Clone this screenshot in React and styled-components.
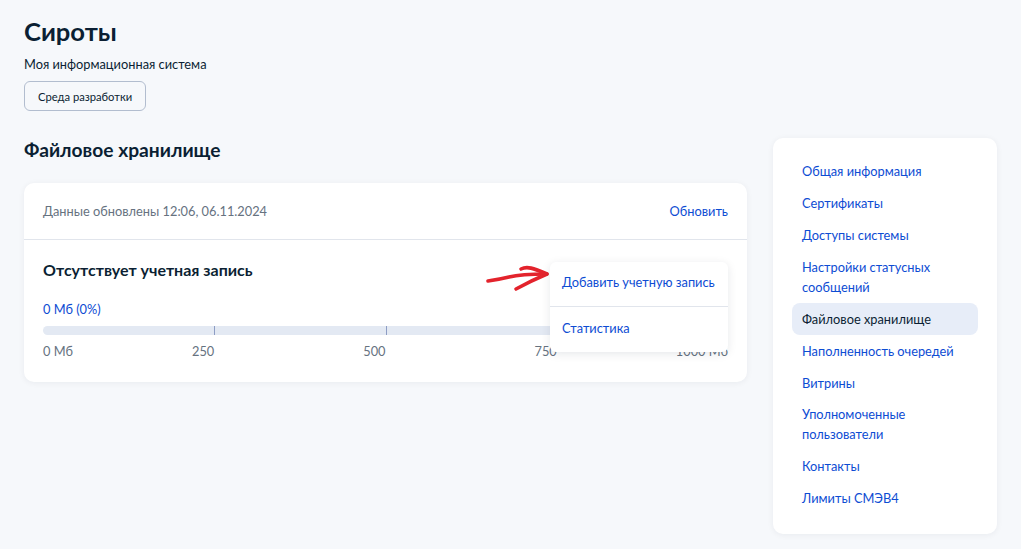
import React from "react";
import styled, { createGlobalStyle } from "styled-components";

const Global = createGlobalStyle`
  html, body { margin: 0; padding: 0; }
  body {
    background: #f6f8fb;
    font-family: Lato, "Noto Sans", sans-serif;
    color: #0b1f33;
  }
  * { box-sizing: border-box; }
`;

const Page = styled.div`
  padding: 12px 24px 16px 24px;
  min-height: 549px;
`;

const Header = styled.header`
  display: flex;
  flex-direction: column;
  align-items: flex-start;
`;

const Title = styled.h1`
  margin: 0;
  font-size: 25.6px;
  line-height: 38px;
  font-weight: 700;
  color: #0b1f33;
`;

const Subtitle = styled.div`
  margin-top: 5px;
  font-size: 12.8px;
  line-height: 19px;
  color: #0b1f33;
`;

const EnvButton = styled.button`
  margin-top: 7px;
  height: 30px;
  padding: 0 13px;
  border: 1px solid #b2bdcf;
  border-radius: 6px;
  background: transparent;
  font-family: inherit;
  font-size: 11.2px;
  color: #0b1f33;
`;

const Row = styled.div`
  display: flex;
  align-items: flex-start;
  gap: 26px;
  margin-top: 27px;
`;

const Main = styled.main`
  width: 723px;
  display: flex;
  flex-direction: column;
`;

const SectionTitle = styled.h2`
  margin: 0;
  font-size: 19.2px;
  line-height: 24px;
  font-weight: 700;
  color: #0b1f33;
`;

const Card = styled.section`
  margin-top: 21px;
  background: #fff;
  border-radius: 10px;
  box-shadow: 0 1px 6px rgba(11, 31, 51, 0.06);
`;

const CardHead = styled.div`
  display: flex;
  justify-content: space-between;
  align-items: center;
  height: 57px;
  padding: 0 19px;
  border-bottom: 1px solid #e1e5ec;
`;

const Muted = styled.span`
  font-size: 12.8px;
  color: #66727f;
`;

const Link = styled.a`
  font-size: 12.8px;
  color: #0d4cd3;
  text-decoration: none;
  cursor: pointer;
`;

const CardBody = styled.div`
  position: relative;
  padding: 20px 19px 22px;
`;

const AccountTitle = styled.div`
  font-size: 16px;
  line-height: 20px;
  font-weight: 700;
  color: #0b1f33;
`;

const Usage = styled.div`
  margin-top: 21px;
  font-size: 12.8px;
  line-height: 17px;
  color: #0d4cd3;
`;

const Bar = styled.div`
  position: relative;
  margin-top: 8px;
  height: 9px;
  border-radius: 5px;
  background: #e3e9f3;
`;

const Tick = styled.span`
  position: absolute;
  top: 0;
  width: 1px;
  height: 9px;
  background: #8d9dc4;
`;

const Scale = styled.div`
  display: grid;
  grid-template-columns: repeat(4, 1fr);
  margin-top: 8px;
  font-size: 12.8px;
  line-height: 17px;
  color: #66727f;
`;

const ScaleCell = styled.div`
  display: flex;
  justify-content: space-between;
`;

const Menu = styled.div`
  position: absolute;
  top: 22px;
  right: 19px;
  width: 178px;
  background: #fff;
  border-radius: 6px;
  box-shadow: 0 2px 10px rgba(11, 31, 51, 0.1);
  display: flex;
  flex-direction: column;
`;

const MenuItem = styled.a`
  display: block;
  padding: ${(p) => p.$pad};
  font-size: 12.8px;
  line-height: 19px;
  color: #0d4cd3;
  border-top: ${(p) => (p.$divider ? "1px solid #e1e5ec" : "none")};
  cursor: pointer;
`;

const Arrow = styled.svg`
  position: absolute;
  left: 461px;
  top: 21px;
  overflow: visible;
`;

const Sidebar = styled.nav`
  width: 224px;
  background: #fff;
  border-radius: 10px;
  box-shadow: 0 1px 6px rgba(11, 31, 51, 0.06);
  padding: 18px 19px 20px;
  display: flex;
  flex-direction: column;
`;

const NavItem = styled.a`
  display: block;
  padding: 6.4px 10px;
  border-radius: 8px;
  font-size: 12.8px;
  line-height: 19.2px;
  color: ${(p) => (p.$active ? "#0b1f33" : "#0d4cd3")};
  background: ${(p) => (p.$active ? "#e7edf8" : "transparent")};
  cursor: pointer;
`;

const navItems = [
  ["Общая информация"],
  ["Сертификаты"],
  ["Доступы системы"],
  ["Настройки статусных", "сообщений"],
  ["Файловое хранилище"],
  ["Наполненность очередей"],
  ["Витрины"],
  ["Уполномоченные", "пользователи"],
  ["Контакты"],
  ["Лимиты СМЭВ4"],
];

export default function App() {
  return (
    <>
      <Global />
      <Page>
        <Header>
          <Title>Сироты</Title>
          <Subtitle>Моя информационная система</Subtitle>
          <EnvButton>Среда разработки</EnvButton>
        </Header>
        <Row>
          <Main>
            <SectionTitle>Файловое хранилище</SectionTitle>
            <Card>
              <CardHead>
                <Muted>Данные обновлены 12:06, 06.11.2024</Muted>
                <Link>Обновить</Link>
              </CardHead>
              <CardBody>
                <AccountTitle>Отсутствует учетная запись</AccountTitle>
                <Usage>0 Мб (0%)</Usage>
                <Bar>
                  <Tick style={{ left: "25%" }} />
                  <Tick style={{ left: "50%" }} />
                  <Tick style={{ left: "75%" }} />
                </Bar>
                <Scale>
                  <ScaleCell>
                    <span>0 Мб</span>
                    <span>250</span>
                  </ScaleCell>
                  <ScaleCell>
                    <span />
                    <span>500</span>
                  </ScaleCell>
                  <ScaleCell>
                    <span />
                    <span>750</span>
                  </ScaleCell>
                  <ScaleCell>
                    <span />
                    <span>1000 Мб</span>
                  </ScaleCell>
                </Scale>
                <Arrow width="66" height="34" viewBox="0 0 66 34">
                  <path
                    d="M3 20 C 10 19, 16 18, 24 16 C 32 14, 44 13, 62 13"
                    fill="none"
                    stroke="#e3232c"
                    strokeWidth="3.6"
                    strokeLinecap="round"
                  />
                  <path
                    d="M36 8 C 42 5, 48 7, 62 13 C 50 18, 42 22, 31 28"
                    fill="none"
                    stroke="#e3232c"
                    strokeWidth="3.6"
                    strokeLinecap="round"
                    strokeLinejoin="round"
                  />
                </Arrow>
                <Menu>
                  <MenuItem $pad="11px 12px 14px">Добавить учетную запись</MenuItem>
                  <MenuItem $pad="12px 12px 14px" $divider>
                    Статистика
                  </MenuItem>
                </Menu>
              </CardBody>
            </Card>
          </Main>
          <Sidebar>
            {navItems.map((lines) => {
              const label = lines.join(" ");
              return (
                <NavItem key={label} $active={label === "Файловое хранилище"}>
                  {lines.map((l, i) => (
                    <React.Fragment key={l}>
                      {i > 0 && <br />}
                      {l}
                    </React.Fragment>
                  ))}
                </NavItem>
              );
            })}
          </Sidebar>
        </Row>
      </Page>
    </>
  );
}
